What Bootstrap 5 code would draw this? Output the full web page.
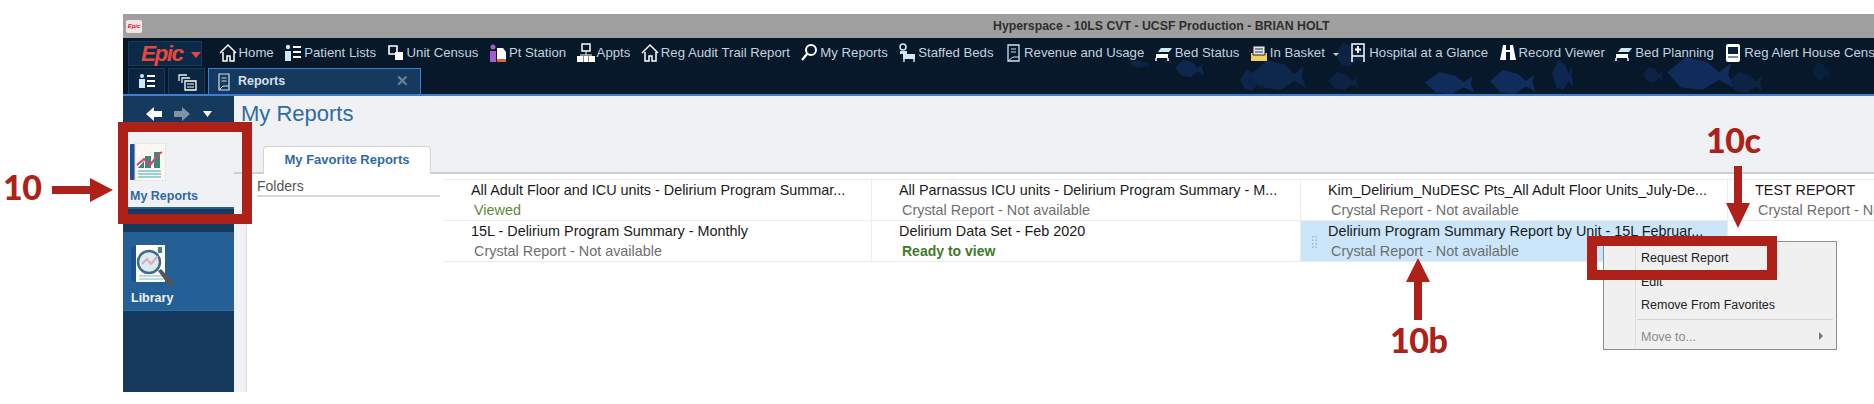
<!DOCTYPE html>
<html lang="en">
<head>
<meta charset="utf-8">
<title>My Reports</title>
<link href="https://cdn.jsdelivr.net/npm/bootstrap@5.3.0/dist/css/bootstrap.min.css" rel="stylesheet">
<style>
html,body{height:404px;overflow:hidden;background:#fff}
body{font-family:"Liberation Sans",Arial,sans-serif;position:relative;font-size:13.5px}
.win{position:absolute;left:123px;top:14px;width:1751px;height:378px;overflow:hidden;background:#fff}
.tbar{height:24px;background:#9f9f9f;color:#2e2e2e;font-weight:700;font-size:12.3px;padding-left:3px}
.tbar-logo{width:16px;height:13px;background:#f4e4e6;border-radius:2px;color:#d3202a;font-size:6px;line-height:13px;text-align:center;font-style:italic}
.tbar-text{margin-left:851px}
.top{height:56px;background:#061829;position:relative;overflow:hidden}
.fish{position:absolute;left:0;top:0;width:1751px;height:56px}
.nrow{height:30px;position:relative;padding-left:5px}
.epicbtn{width:77px;height:25px;margin-top:3px;background:#0b2a48;border:1px solid #17395c;padding-left:12px;color:#e8463e;font-weight:700;font-style:italic;font-size:22.500px;letter-spacing:-1.500px;line-height:23px}
.epictri{width:0;height:0;border-left:5px solid transparent;border-right:5px solid transparent;border-top:6px solid #e8463e;margin-left:8px;margin-top:2px}
.nitems{margin-left:17px;gap:10.5px;white-space:nowrap;color:#c3d2df;font-size:13.2px;height:30px}
.nitem{gap:2px}
.nitem svg{width:18px;height:20px;flex:none}
.caretw{width:0;height:0;border-left:3px solid transparent;border-right:3px solid transparent;border-top:3px solid #c3d2df;margin-left:6px;margin-top:3px}
.trow{height:26px;position:relative;padding-left:5px;gap:3px}
.tsq{width:37px;height:26px;background:#0a2540;border:1px solid #17395c;border-bottom:0}
.tsq svg{width:20px;height:18px}
.ttab{width:213px;height:26px;background:#163a5e;border:1px solid #3b7fd4;border-bottom:0;color:#d5e0ea;font-weight:700;font-size:12.5px;padding-left:9px}
.ttab svg{width:12px;height:18px;margin-right:8px}
.ttab .xbtn{margin-left:auto;margin-right:11px;color:#6b8198;font-size:15px;font-weight:700}
.bline{height:2px;background:#3b7fd4}
.mainarea{height:298px}
.side{width:111px;background:#163a5e;flex:none}
.navback{height:32px;padding:3px 0 0 23px}
.navback svg{width:66px;height:14px}
.tile1{height:81px;background:#f0f1f4;border-bottom:2px solid #2a5c8c;padding:15px 0 0 7px;margin-bottom:23px;color:#2f6aa8;font-weight:700;font-size:12.5px}
.tile2{height:79px;background:#245f96;border-bottom:1px solid #2d6da8;padding:13px 0 0 8px;color:#eef3f8;font-weight:700;font-size:12.5px}
.tile1 svg{display:block;width:36px;height:38px;margin-bottom:6px}
.tile2 svg{display:block;width:46px;height:46px;margin-bottom:-2px}
.content{min-width:0;flex:1}
.chead{height:78px;background:#f0f1f4;border-bottom:2px solid #cfcfcf;position:relative;padding:6px 0 0 7px}
.chead-title{color:#2f6ba6;font-size:22px;line-height:24px}
.ctab{position:absolute;left:29px;bottom:-2px;width:168px;height:28px;background:#fff;border:1px solid #d4d4d4;border-bottom:0;border-radius:4px 4px 0 0;color:#2f6ba6;font-weight:700;font-size:13px;line-height:26px;text-align:center}
.cbody{height:220px}
.strip{width:13px;background:#f0f1f4;border-right:1px solid #dcdcdc;flex:none}
.folders{width:183px;margin-left:10px;flex:none;height:21px;border-bottom:2px solid #d8d8d8;color:#555;font-size:14px;line-height:25px;margin-right:4px;box-sizing:content-box}
.rgrid{display:grid;grid-template-columns:428px 429px 427px 300px;grid-template-rows:41px 41px;align-content:start;margin-top:5px;border-top:1px solid #ececec}
.rc{border-right:1px solid #ececec;border-bottom:1px solid #ececec;padding-left:27px;white-space:nowrap;overflow:hidden;position:relative;color:#1a1a1a;font-size:14.4px;line-height:20px}
.rsub{color:#6e6e6e;padding-left:3px}
.rgreen{color:#5d8a3c}
.rgreen2{color:#3f7a2a;font-weight:700;font-size:14px}
.rsel{background:#cbe6fb}
.grip{position:absolute;left:10px;top:14px;width:7px;height:13px;background-image:radial-gradient(#a9bccb 1px,transparent 1.2px);background-size:3.5px 3.5px}
.cmenu{position:absolute;left:1603px;top:241px;width:234px;height:109px;background:#f0f0f0;border:1px solid #8e8e8e;font-size:12.5px;color:#222;z-index:3}
.cmenu::before{content:"";position:absolute;left:31px;top:2px;bottom:2px;width:1px;background:#dcdcdc}
.mi{position:absolute;left:37px;white-space:nowrap}
.m1{top:7px}.m2{top:31px}.m3{top:54px}.m4{top:86px;color:#8a8a8a}
.msep{position:absolute;left:33px;right:3px;top:77px;height:1px;background:#d4d4d4}
.marrow{position:absolute;right:13px;top:90px;width:0;height:0;border-top:4px solid transparent;border-bottom:4px solid transparent;border-left:4px solid #777}
.rbox{position:absolute;border-style:solid;border-color:#ae2118;z-index:4;pointer-events:none}
.rb1{left:118px;top:122px;width:134px;height:102px;border-width:10px}
.rb2{left:1587px;top:236px;width:190px;height:44px;border-width:10px}
.note{position:absolute;color:#ae2118;font-family:Lato,"Liberation Sans",sans-serif;font-weight:900;font-size:34px;line-height:36px;z-index:5;letter-spacing:-.5px}
.n1{left:3px;top:169px}
.n2{left:1706px;top:122px}
.n3{left:1390px;top:322px}
.arrows{position:absolute;left:0;top:0;width:1874px;height:404px;z-index:5;pointer-events:none}
</style>
</head>
<body>
<div class="win">
  <div class="tbar d-flex align-items-center">
    <div class="tbar-logo flex-none">Epic</div>
    <div class="tbar-text">Hyperspace - 10LS CVT - UCSF Production - BRIAN HOLT</div>
  </div>
  <div class="top">
    <svg class="fish" viewBox="0 0 1751 56">
      <defs><path id="fs" d="M0 12 L16 0 L34 4 L44 12 L54 5 L52 14 L56 24 L44 18 L30 26 L12 24Z"/></defs>
      <g fill="#102c5a">
        <use href="#fs" transform="translate(1007 22) scale(.35 .3)" opacity=".6"/>
        <use href="#fs" transform="translate(1052 22) scale(.52 .65)" opacity=".8"/>
        <use href="#fs" transform="translate(1117 32) scale(.4 .8)" opacity=".7"/>
        <use href="#fs" transform="translate(1129 22) scale(.96 1.15)" opacity=".75"/>
        <use href="#fs" transform="translate(1205 34) scale(.55 .7)" opacity=".5"/>
        <use href="#fs" transform="translate(1212 5) scale(.5 .9)" opacity=".6"/>
        <use href="#fs" transform="translate(1302 34) scale(.88 .85)"/>
        <use href="#fs" transform="translate(1367 32) scale(.82 .92)"/>
        <use href="#fs" transform="translate(1429 22) scale(.38 1.15)" opacity=".8"/>
        <use href="#fs" transform="translate(1520 29) scale(.36 .6)" opacity=".6"/>
        <use href="#fs" transform="translate(1544 19) scale(1.18 1.27)"/>
        <use href="#fs" transform="translate(1606 34) scale(.6 .8)" opacity=".6"/>
        <use href="#fs" transform="translate(1690 24) scale(.3 .7)" opacity=".4"/>
      </g>
    </svg>
    <div class="nrow d-flex align-items-start">
      <div class="epicbtn d-flex align-items-center flex-none">Epic<span class="epictri"></span></div>
      <div class="nitems d-flex align-items-center">
        <div class="nitem d-flex align-items-center"><svg viewBox="0 0 18 20"><path d="M1 10 9 2l8 8M4 9v9h4v-5h3v5h4V9" fill="none" stroke="#fff" stroke-width="1.5"/></svg>Home</div>
        <div class="nitem d-flex align-items-center"><svg viewBox="0 0 18 20"><circle cx="4" cy="4" r="2.2" fill="#cfe6f6"/><path d="M1 8h6v10H1z" fill="#cfe6f6"/><path d="M9 4h8M9 9h8M9 14h8" stroke="#fff" stroke-width="2"/></svg>Patient Lists</div>
        <div class="nitem d-flex align-items-center"><svg viewBox="0 0 18 20"><path d="M2 3h8v8H2z" fill="none" stroke="#fff" stroke-width="1.6"/><path d="M8 9h8v8H8z" fill="#fff"/></svg>Unit Census</div>
        <div class="nitem d-flex align-items-center"><svg viewBox="0 0 18 20"><circle cx="4" cy="4" r="2.5" fill="#a55bd0"/><path d="M1 8h6v11H1z" fill="#a55bd0"/><path d="M8 5h6l3 4v7H8z" fill="#fff"/><path d="M8 16h9v3H8z" fill="#d8662a"/></svg>Pt Station</div>
        <div class="nitem d-flex align-items-center"><svg viewBox="0 0 18 20"><path d="M5 1h8v7H5z" fill="none" stroke="#fff" stroke-width="1.5"/><path d="M9 8v4M3 12h12" stroke="#fff"/><path d="M0 13h6v6H0zM6.500 13h5v6h-5zM12 13h6v6h-6z" fill="#fff"/></svg>Appts</div>
        <div class="nitem d-flex align-items-center"><svg viewBox="0 0 18 20"><path d="M1 10 9 2l8 8M4 9v9h4v-5h3v5h4V9" fill="none" stroke="#fff" stroke-width="1.5"/></svg>Reg Audit Trail Report</div>
        <div class="nitem d-flex align-items-center"><svg viewBox="0 0 18 20"><circle cx="11" cy="7" r="5" fill="none" stroke="#fff" stroke-width="2"/><path d="M7 11 2 17" stroke="#fff" stroke-width="2.200"/></svg>My Reports</div>
        <div class="nitem d-flex align-items-center"><svg viewBox="0 0 18 20"><circle cx="5" cy="4" r="3" fill="none" stroke="#cfe6f6" stroke-width="1.500"/><path d="M2 8h7v3H2z" fill="#cfe6f6"/><path d="M5 11h12v5H5z" fill="#cfe6f6"/><path d="M6 16v3M16 16v3" stroke="#cfe6f6" stroke-width="1.500"/></svg>Staffed Beds</div>
        <div class="nitem d-flex align-items-center"><svg viewBox="0 0 18 20"><path d="M4 2h11v16H4z" fill="none" stroke="#cfe0ee" stroke-width="1.300"/><path d="M7 6h5M7 9h5M4 18l5-4h6" fill="none" stroke="#cfe0ee"/></svg>Revenue and Usage</div>
        <div class="nitem d-flex align-items-center"><svg viewBox="0 0 18 20"><path d="M6 5h11l-3 4H3z" fill="#cfe6f6"/><path d="M1 11h12v4H1z" fill="#fff"/><path d="M1 15v3M13 15v3" stroke="#fff" stroke-width="1.500"/></svg>Bed Status</div>
        <div class="nitem d-flex align-items-center"><svg viewBox="0 0 18 20"><path d="M1 10h16v8H1z" fill="#f2d060"/><path d="M3 3h12v9H3z" fill="#dce8f2" stroke="#222"/><path d="M5 6h8M5 9h8" stroke="#333"/></svg>In Basket<span class="caretw"></span></div>
        <div class="nitem d-flex align-items-center"><svg viewBox="0 0 18 20"><path d="M3 19V1h12v18M3 13h12" fill="none" stroke="#fff" stroke-width="1.500"/><path d="M9 3v7M6 6.500h6" stroke="#fff" stroke-width="1.800"/></svg>Hospital at a Glance</div>
        <div class="nitem d-flex align-items-center"><svg viewBox="0 0 18 20"><path d="M4 2h3v5h4V2h3l3 15h-6V9H7v8H1z" fill="#fff"/></svg>Record Viewer</div>
        <div class="nitem d-flex align-items-center"><svg viewBox="0 0 18 20"><path d="M6 5h11l-3 4H3z" fill="#cfe6f6"/><path d="M1 11h12v4H1z" fill="#fff"/><path d="M1 15v3M13 15v3" stroke="#fff" stroke-width="1.500"/></svg>Bed Planning</div>
        <div class="nitem d-flex align-items-center"><svg viewBox="0 0 18 20"><rect x="2" y="1" width="14" height="18" rx="2" fill="#fff"/><path d="M4 4h10v7H4z" fill="#0a2036"/><path d="M4 14h10" stroke="#0a2036"/></svg>Reg Alert House Census</div>
      </div>
    </div>
    <div class="trow d-flex align-items-start">
      <div class="tsq d-flex align-items-center justify-content-center flex-none"><svg viewBox="0 0 20 18"><circle cx="5" cy="3" r="2" fill="#cfe6f6"/><path d="M2 6h6v9H2z" fill="#cfe6f6"/><path d="M10 3h8M10 8h8M10 13h8" stroke="#fff" stroke-width="2"/></svg></div>
      <div class="tsq d-flex align-items-center justify-content-center flex-none"><svg viewBox="0 0 20 18"><path d="M2 8V2h8M5 10V5h8" fill="none" stroke="#e8eef4" stroke-width="1.300"/><path d="M8 8h11v9H8z" fill="none" stroke="#fff" stroke-width="1.300"/><path d="M10 11h7M10 14h7" stroke="#fff"/></svg></div>
      <div class="ttab d-flex align-items-center flex-none"><svg viewBox="0 0 12 18"><path d="M1 1h10v16H1z" fill="none" stroke="#cfe0ee" stroke-width="1.200"/><path d="M3.500 5h5M3.500 8h5M1 17l4-4h6" fill="none" stroke="#cfe0ee"/></svg><span>Reports</span><span class="xbtn">✕</span></div>
    </div>
  </div>
  <div class="bline"></div>
  <div class="mainarea d-flex">
    <div class="side">
      <div class="navback d-flex align-items-center">
        <svg viewBox="0 0 66 14"><path d="M0 7 8 0v4h8v6H8v4z" fill="#fff"/><path d="M44 7 36 0v4h-8v6h8v4z" fill="#7f93a6"/><path d="M57 4h9l-4.500 6z" fill="#fff"/></svg>
      </div>
      <div class="tile1">
        <svg viewBox="0 0 36 38"><rect x="0" y="1" width="5" height="36" rx="1" fill="#1d4f94"/><rect x="5" y="0" width="31" height="38" fill="#fbf8f2" stroke="#ddd6c8"/><path d="M8 25l6-7v7zM15 25V13h6v12zM24 25V9h6v16z" fill="#3b8a72"/><path d="M7 22l7-6 6 6 9-11 3-2" fill="none" stroke="#d4417f" stroke-width="2"/><path d="M8 28h23M8 31h23M8 34h23" stroke="#7dc2cf" stroke-width="1.500"/></svg>
        My Reports
      </div>
      <div class="tile2">
        <svg viewBox="0 0 46 46"><rect x="0" y="1" width="8" height="36" rx="2" fill="#1d4f94"/><rect x="5" y="0" width="29" height="37" fill="#fff"/><path d="M27 8V2h4v6z" fill="#3b8a72"/><path d="M8 31h24M8 34h24" stroke="#9fd2dc" stroke-width="1.500"/><circle cx="18" cy="17" r="11" fill="#c8e4e4" fill-opacity=".7" stroke="#44678a" stroke-width="2.500"/><path d="M11 19l5-5 4 5 7-8" fill="none" stroke="#e0a4c0" stroke-width="2"/><path d="M27 26l3-2 13 14-4 4z" fill="#555"/></svg>
        Library
      </div>
    </div>
    <div class="content">
      <div class="chead">
        <div class="chead-title">My Reports</div>
        <div class="ctab">My Favorite Reports</div>
      </div>
      <div class="cbody d-flex">
        <div class="strip"></div>
        <div class="folders">Folders</div>
        <div class="rgrid flex-none">
          <div class="rc">All Adult Floor and ICU units - Delirium Program Summar...<div class="rsub rgreen">Viewed</div></div>
          <div class="rc">All Parnassus ICU units - Delirium Program Summary - M...<div class="rsub">Crystal Report - Not available</div></div>
          <div class="rc">Kim_Delirium_NuDESC Pts_All Adult Floor Units_July-De...<div class="rsub">Crystal Report - Not available</div></div>
          <div class="rc">TEST REPORT<div class="rsub">Crystal Report - Not available</div></div>
          <div class="rc">15L - Delirium Program Summary - Monthly<div class="rsub">Crystal Report - Not available</div></div>
          <div class="rc">Delirium Data Set - Feb 2020<div class="rsub rgreen2">Ready to view</div></div>
          <div class="rc rsel"><span class="grip"></span>Delirium Program Summary Report by Unit - 15L Februar...<div class="rsub">Crystal Report - Not available</div></div>
        </div>
      </div>
    </div>
  </div>
</div>

<div class="cmenu">
  <div class="mi m1">Request Report</div>
  <div class="mi m2">Edit</div>
  <div class="mi m3">Remove From Favorites</div>
  <div class="msep"></div>
  <div class="mi m4">Move to...</div>
  <div class="marrow"></div>
</div>
<div class="rbox rb1"></div>
<div class="rbox rb2"></div>
<svg class="arrows" viewBox="0 0 1874 404">
  <g fill="#ae2118">
    <path d="M52 186H90V178L113 190 90 202V194H52Z"/>
    <path d="M1734 166H1742V203H1750L1738 228 1726 203H1734Z"/>
    <path d="M1414 320V282H1406L1418 258 1430 282H1422V320Z"/>
  </g>
</svg>
<div class="note n1">10</div>
<div class="note n2">10c</div>
<div class="note n3">10b</div>
</body>
</html>
